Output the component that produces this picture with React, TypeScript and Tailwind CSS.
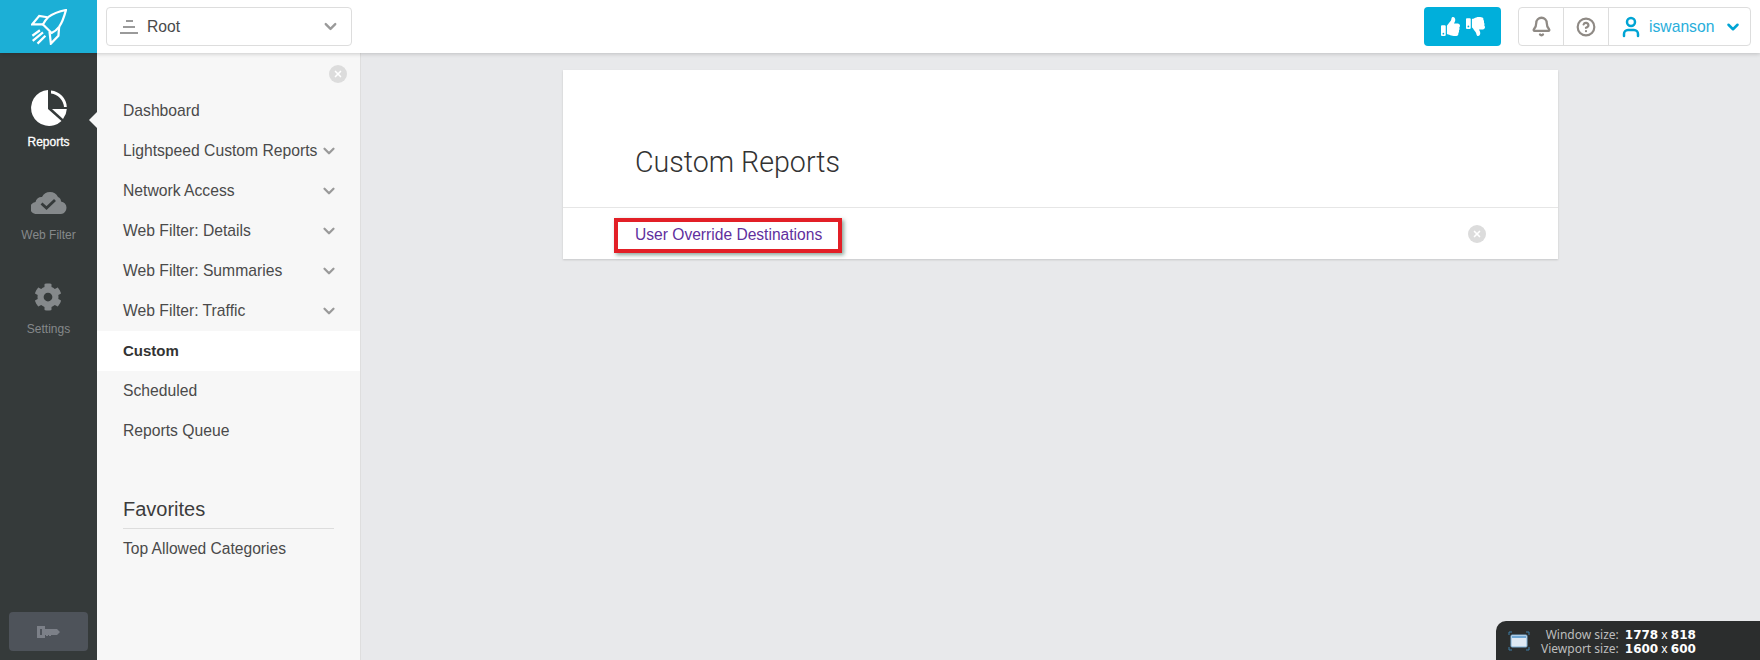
import { Bell, ChevronDown, CircleHelp, User, X } from "lucide-react";
import { FaCog, FaThumbsDown, FaThumbsUp } from "react-icons/fa";

const menuItems = [
  { label: "Dashboard" },
  { label: "Lightspeed Custom Reports", sub: true },
  { label: "Network Access", sub: true },
  { label: "Web Filter: Details", sub: true },
  { label: "Web Filter: Summaries", sub: true },
  { label: "Web Filter: Traffic", sub: true },
  { label: "Custom", active: true },
  { label: "Scheduled" },
  { label: "Reports Queue" },
];

const RocketLogo = () => (
  <svg width="36" height="36" viewBox="0 0 105 105" fill="none" stroke="white" strokeWidth="6.5" strokeLinejoin="miter">
    <path d="M102 3 C86 6 66 12 50 24 C44 30 38 38 35 45 L60 70 C68 66 76 60 82 52 C92 38 98 18 102 3 Z" />
    <path d="M48 24 L24 20 L3 45 L35 45" />
    <path d="M82 52 L80 78 L58 101 L54 66" />
    <path d="M4 78 L26 62 M5 93 L35 68 M19 101 L42 78" />
  </svg>
);

const PieIcon = () => (
  <svg width="36" height="36" viewBox="0 0 36 36" fill="white">
    <path d="M17 0 V19 L30.5 31 A18 18 0 1 1 17 0 Z" />
    <path d="M20 .5 A17.5 17.5 0 0 1 35.8 17 H33 A15 15 0 0 0 20 3.4 Z" />
    <path d="M21 19 H35.8 A18 18 0 0 1 32 29 Z" />
  </svg>
);

const CloudCheck = () => (
  <svg width="36" height="25" viewBox="0 0 36 25">
    <path d="M6 25 A6 6 0 0 1 4.5 13 A6 6 0 0 1 11 8 A9 9 0 0 1 27 8 A5 5 0 0 1 30 12.5 A6.3 6.3 0 0 1 30 25 Z" fill="#85898b" />
    <path d="M10.5 14.5 L15.5 19 L24 11" fill="none" stroke="#353a3a" strokeWidth="2.8" />
  </svg>
);

const KeyIcon = () => (
  <svg width="23" height="12" viewBox="0 0 23 12" fill="#7c8088">
    <path d="M0 0 H8 V3 H20 L23 6 L20 9 H14 V10 H12 V9 H11 V10 H9 V9 H8 V12 H0 Z M3 3 V9 H5 V3 Z" fillRule="evenodd" />
  </svg>
);

const RootIcon = () => (
  <svg width="18" height="14" viewBox="0 0 18 14" fill="#9a9a9a">
    <rect x="6" y="0" width="7" height="2" />
    <rect x="3" y="6" width="12" height="2" />
    <rect x="0" y="12" width="18" height="2" />
  </svg>
);

const WindowIcon = () => (
  <svg width="22" height="20" viewBox="0 0 22 20" fill="none">
    <path d="M1 4 V1 H4 M18 1 H21 V4 M1 16 V19 H4 M18 19 H21 V16" stroke="#3f7fa8" strokeWidth="1" />
    <rect x="3" y="4" width="16" height="12" rx="1" fill="#dfe9f3" stroke="#7fb0d6" />
    <rect x="4" y="5" width="14" height="2" fill="#6ea6d4" />
  </svg>
);

const CloseDot = ({ className }: { className: string }) => (
  <span className={`flex h-[18px] w-[18px] items-center justify-center rounded-full bg-[#dcdcdc] ${className}`}>
    <X size={10} strokeWidth={4} color="white" />
  </span>
);

export default function App() {
  return (
    <div className="relative flex h-[660px] w-[1760px] flex-col overflow-hidden bg-[#e8e9eb] font-['Liberation_Sans',Arial,sans-serif] text-[#4a4a4a]">
      {/* top bar */}
      <header className="z-10 flex h-[53px] shrink-0 items-center bg-white shadow-[0_1px_4px_rgba(0,0,0,0.18)]">
        <div className="flex h-[53px] w-[97px] items-center justify-center bg-[#1cafd6]">
          <RocketLogo />
        </div>
        <div className="ml-[9px] flex h-[39px] w-[246px] items-center rounded border border-[#dddddd] pl-[13px] pr-[11px]">
          <RootIcon />
          <span className="ml-[9px] flex-1 text-[15.7px]">Root</span>
          <ChevronDown size={19} strokeWidth={3} color="#9a9a9a" />
        </div>
        <button className="ml-auto flex h-[39px] w-[77px] items-center justify-center gap-[6px] rounded bg-[#00afdb] text-white">
          <FaThumbsUp size={19} />
          <FaThumbsDown size={19} />
        </button>
        <div className="ml-[17px] mr-[9px] flex h-[39px] w-[233px] items-center rounded border border-[#dddddd]">
          <div className="flex h-full w-[45px] items-center justify-center border-r border-[#dddddd]">
            <Bell size={21} strokeWidth={2.6} color="#8f8a85" />
          </div>
          <div className="flex h-full w-[45px] items-center justify-center border-r border-[#dddddd]">
            <CircleHelp size={20} strokeWidth={2.6} color="#8f8a85" />
          </div>
          <div className="flex flex-1 items-center pl-[10px] text-[#29aedb]">
            <User size={24} strokeWidth={2.5} color="#00a4d4" />
            <span className="ml-[6px] text-[15.7px]">iswanson</span>
            <ChevronDown size={18} strokeWidth={3.4} color="#00a4d4" className="ml-[10px]" />
          </div>
        </div>
      </header>

      <div className="flex min-h-0 flex-1">
        {/* icon rail */}
        <nav className="relative flex w-[97px] shrink-0 flex-col items-center bg-[#353a3a]">
          <div className="mt-[37px] flex flex-col items-center text-white">
            <PieIcon />
            <span className="mt-[9px] text-[12px] leading-[14px] [-webkit-text-stroke:0.3px_white]">Reports</span>
          </div>
          <span className="absolute right-0 top-[59px] h-0 w-0 border-y-[8px] border-r-[8px] border-y-transparent border-r-[#f7f7f7]" />
          <div className="mt-[40px] flex flex-col items-center text-[#85898b]">
            <CloudCheck />
            <span className="mt-[14px] text-[12px] leading-[14px]">Web Filter</span>
          </div>
          <div className="mt-[41px] flex flex-col items-center text-[#85898b]">
            <FaCog size={28} />
            <span className="mt-[11px] text-[12px] leading-[14px]">Settings</span>
          </div>
          <button className="mt-auto mb-[9px] flex h-[39px] w-[79px] items-center justify-center rounded bg-[#4e535a]">
            <KeyIcon />
          </button>
        </nav>

        {/* report menu */}
        <aside className="relative w-[264px] shrink-0 border-r border-[#dedede] bg-[#f7f7f7] pt-[38px]">
          <CloseDot className="absolute right-[13px] top-[12px]" />
          <ul>
            {menuItems.map((item) => (
              <li
                key={item.label}
                className={`flex h-[40px] items-center justify-between pl-[26px] pr-[22px] ${
                  item.active ? "bg-white text-[15px] font-bold text-[#333333]" : "text-[15.7px]"
                }`}
              >
                {item.label}
                {item.sub && <ChevronDown size={18} strokeWidth={3} color="#9a9a9a" />}
              </li>
            ))}
          </ul>
          <div className="mx-[26px] mt-[44px]">
            <h3 className="border-b border-[#dddddd] pb-[5px] text-[20px] leading-[28px] text-[#3c3c3c]">Favorites</h3>
            <p className="mt-[10px] text-[15.6px] leading-[20px]">Top Allowed Categories</p>
          </div>
        </aside>

        {/* content */}
        <main className="min-w-0 flex-1 pt-[17px]">
          <div className="mx-auto w-[995px] bg-white shadow-[0_1px_2px_rgba(0,0,0,0.15)]">
            <div className="h-[138px] border-b border-[#e6e6e6] pl-[72px] pt-[74px]">
              <h1 className="font-['Roboto',sans-serif] text-[28.6px] font-light leading-[36px] text-[#333333]">Custom Reports</h1>
            </div>
            <div className="flex h-[51px] items-center justify-between pl-[51px] pr-[72px]">
              <a className="mt-[4px] flex h-[35px] w-[228px] items-center border-[4px] border-[#e21f26] pb-[2px] pl-[17px] text-[15.6px] text-[#5f2f9e] shadow-[2px_2px_4px_rgba(40,90,70,0.55)]">
                User Override Destinations
              </a>
              <CloseDot className="" />
            </div>
          </div>
        </main>
      </div>

      {/* viewport size overlay */}
      <div className="absolute bottom-0 right-0 flex h-[39px] w-[264px] items-center rounded-tl-[10px] bg-[#2b2d2d] pl-[12px]">
        <WindowIcon />
        <div className="ml-[11px] mt-[3px] whitespace-nowrap text-[12px] leading-[14px] text-[#bdbdbd]">
          <div className="flex justify-end gap-[6px] font-['Noto_Sans',sans-serif]">
            <span>Window size:</span>
            <span className="w-[72px] text-white"><b className="font-['DejaVu_Sans',sans-serif]">1778</b> x <b className="font-['DejaVu_Sans',sans-serif]">818</b></span>
          </div>
          <div className="flex justify-end gap-[6px] font-['Noto_Sans',sans-serif]">
            <span>Viewport size:</span>
            <span className="w-[72px] text-white"><b className="font-['DejaVu_Sans',sans-serif]">1600</b> x <b className="font-['DejaVu_Sans',sans-serif]">600</b></span>
          </div>
        </div>
      </div>
    </div>
  );
}
